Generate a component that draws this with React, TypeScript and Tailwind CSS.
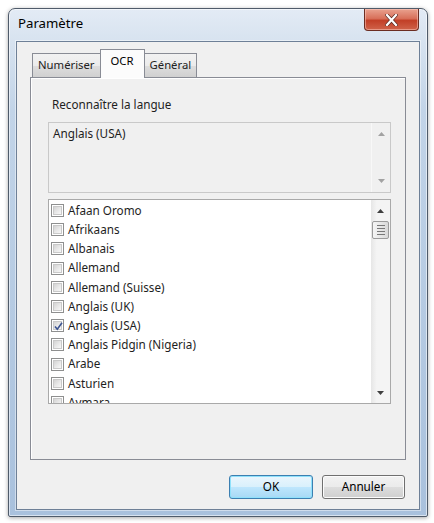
import React from "react";

const languages: { name: string; checked?: boolean }[] = [
  { name: "Afaan Oromo" },
  { name: "Afrikaans" },
  { name: "Albanais" },
  { name: "Allemand" },
  { name: "Allemand (Suisse)" },
  { name: "Anglais (UK)" },
  { name: "Anglais (USA)", checked: true },
  { name: "Anglais Pidgin (Nigeria)" },
  { name: "Arabe" },
  { name: "Asturien" },
  { name: "Aymara" },
];

function Arrow({ dir, color }: { dir: "up" | "down"; color: string }) {
  return (
    <svg width="7" height="4" viewBox="0 0 7 4">
      {dir === "up" ? (
        <path d="M0 4 L3.5 0 L7 4 Z" fill={color} />
      ) : (
        <path d="M0 0 L7 0 L3.5 4 Z" fill={color} />
      )}
    </svg>
  );
}

function CheckBox({ checked }: { checked?: boolean }) {
  return (
    <div className="relative w-[13px] h-[13px] border border-[#8e8f8f] bg-white p-[1px] shrink-0">
      <div className="w-full h-full bg-[linear-gradient(135deg,#d3d3d3_0%,#e9e9e9_55%,#f7f7f7_100%)] border border-[#c9c9c9]" />
      {checked && (
        <svg className="absolute left-[1px] top-[1px]" width="11" height="11" viewBox="0 0 11 11">
          <path d="M2 5.5 L4.3 8.3 L9 1.8" fill="none" stroke="#3b5390" strokeWidth="1.6" />
        </svg>
      )}
    </div>
  );
}

function CloseButton() {
  return (
    <div className="w-[55px] h-[22px] rounded-b-[4px] border border-[#6b2d22] border-t-0 bg-[linear-gradient(180deg,#e9a28f_0%,#d8705a_45%,#c23f27_55%,#d0634a_100%)] flex items-center justify-center shadow-[inset_0_0_0_1px_rgba(255,210,200,0.5)]">
      <svg width="13" height="12" viewBox="0 0 13 12">
        <path d="M2 1 L11 11 M11 1 L2 11" stroke="#5a2a22" strokeWidth="3.6" strokeLinecap="square" />
        <path d="M2 1 L11 11 M11 1 L2 11" stroke="#ffffff" strokeWidth="2.2" strokeLinecap="square" />
      </svg>
    </div>
  );
}

function Tab({ label, selected }: { label: string; selected?: boolean }) {
  if (selected) {
    return (
      <div className="relative z-10 -mx-[1px] h-[29px] px-[10px] pt-[3px] border border-b-0 border-[#898c95] bg-[#fcfcfc] text-[11.3px] text-black">
        {label}
      </div>
    );
  }
  return (
    <div className="h-[25px] px-[5px] pt-[3px] border border-b-0 border-[#898c95] bg-[linear-gradient(180deg,#f2f2f2_0%,#ebebeb_50%,#dddddd_51%,#cfcfcf_100%)] text-[11.3px] text-[#222]">
      {label}
    </div>
  );
}

export default function App() {
  return (
    <div className="w-[434px] h-[523px] bg-white pl-[8px] pt-[8px] font-['Noto_Sans',sans-serif]">
      <div className="w-[420px] h-[509px] rounded-t-[7px] rounded-b-[2px] border border-[#4f5b6a] bg-[linear-gradient(180deg,#e3ebf5_0%,#d6e2ef_7%,#c2d4e8_20%,#b2c8e1_70%,#a9c1dd_100%)] shadow-[0_1px_4px_rgba(0,0,0,0.35),inset_0_0_0_1px_rgba(255,255,255,0.55)] flex flex-col">
        {/* title bar */}
        <div className="h-[32px] flex items-start justify-between pl-[9px] pr-[8px]">
          <div className="pt-[5px] text-[13.2px] text-black">Paramètre</div>
          <CloseButton />
        </div>
        {/* client area */}
        <div className="mx-[7px] h-[469px] border border-[#6e8097] bg-[#f0f0f0] px-[13px] pt-[8px] flex flex-col shadow-[0_0_0_1px_rgba(255,255,255,0.45)]">
          <div className="flex items-end h-[28px] pl-[2px]">
            <Tab label="Numériser" />
            <Tab label="OCR" selected />
            <Tab label="Général" />
          </div>
          <div className="-mt-[1px] h-[383px] border border-[#898c95] bg-[#f0f0f0] shadow-[inset_1px_1px_0_#ffffff] pl-[17px] pr-[14px] flex flex-col">
            <div className="pt-[18px] h-[44px] pl-[4px] text-[11.7px] text-[#1e1e1e]">Reconnaître la langue</div>
            {/* current language field */}
            <div className="h-[71px] border border-[#c9c9c9] bg-[#f0f0f0] flex">
              <div className="flex-1 pl-[4px] pt-[2px] text-[11.7px] text-[#1e1e1e]">Anglais (USA)</div>
              <div className="w-[19px] border-l border-[#f8f8f8] flex flex-col items-center justify-between py-[9px]">
                <Arrow dir="up" color="#a2a2a2" />
                <Arrow dir="down" color="#a2a2a2" />
              </div>
            </div>
            {/* language list */}
            <div className="mt-[6px] h-[205px] border border-[#a9a9a9] bg-white flex overflow-hidden">
              <div className="flex-1 pt-[1px] pl-[2px] overflow-hidden">
                {languages.map((l) => (
                  <div key={l.name} className="h-[19.2px] flex items-center gap-[4px] text-[11.7px] text-[#1e1e1e] whitespace-nowrap">
                    <CheckBox checked={l.checked} />
                    <span>{l.name}</span>
                  </div>
                ))}
              </div>
              <div className="w-[19px] bg-[linear-gradient(90deg,#e6e6e6_0%,#f4f4f4_30%,#f4f4f4_100%)] flex flex-col items-center">
                <div className="h-[21px] flex items-center justify-center">
                  <Arrow dir="up" color="#3f3f3f" />
                </div>
                <div className="w-[17px] h-[18px] rounded-[2px] border border-[#9b9b9b] bg-[linear-gradient(90deg,#f5f5f5_0%,#e7e7e7_50%,#d9d9d9_100%)] flex flex-col items-center justify-center gap-[2px]">
                  <div className="w-[8px] h-[1px] bg-[#787878]" />
                  <div className="w-[8px] h-[1px] bg-[#787878]" />
                  <div className="w-[8px] h-[1px] bg-[#787878]" />
                  <div className="w-[8px] h-[1px] bg-[#787878]" />
                </div>
                <div className="flex-1" />
                <div className="h-[21px] flex items-center justify-center">
                  <Arrow dir="down" color="#3f3f3f" />
                </div>
              </div>
            </div>
          </div>
          {/* buttons */}
          <div className="mt-[15px] flex justify-end gap-[9px] pr-[1px]">
            <div className="w-[84px] h-[24px] rounded-[3px] border border-[#3c7fb1] bg-[linear-gradient(180deg,#eaf6fd_0%,#d9f0fc_50%,#bee6fd_51%,#a7d9f5_100%)] shadow-[inset_0_0_0_1px_#8fe1fb] flex items-center justify-center text-[11.7px] text-black">
              OK
            </div>
            <div className="w-[83px] h-[24px] rounded-[3px] border border-[#707070] bg-[linear-gradient(180deg,#f2f2f2_0%,#ebebeb_50%,#dddddd_51%,#cfcfcf_100%)] shadow-[inset_0_0_0_1px_#fcfcfc] flex items-center justify-center text-[11.7px] text-black">
              Annuler
            </div>
          </div>
        </div>
      </div>
    </div>
  );
}
